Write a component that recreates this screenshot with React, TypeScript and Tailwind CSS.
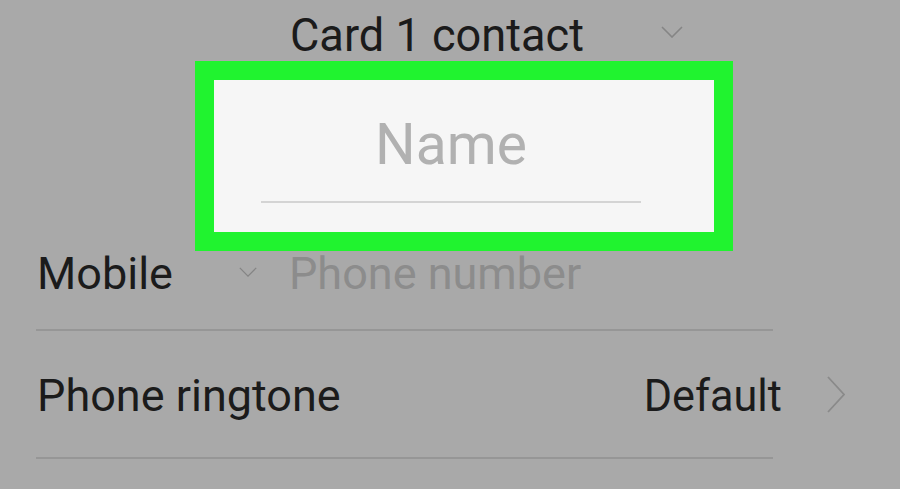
import React from "react";

const ChevronDown = ({ className }: { className?: string }) => (
  <svg viewBox="0 0 22 12" className={className} fill="none" stroke="#858585" strokeWidth={1.6}>
    <path d="M1 1 L11 11 L21 1" />
  </svg>
);

const ChevronRight = ({ className }: { className?: string }) => (
  <svg viewBox="0 0 18 37" className={className} fill="none" stroke="#8a8a8a" strokeWidth={1.8}>
    <path d="M1 1 L17 18.5 L1 36" />
  </svg>
);

export default function App() {
  return (
    <div
      className="w-[900px] h-[489px] bg-[#a9a9a9] overflow-hidden flex flex-col text-[#1b1b1b]"
      style={{ fontFamily: "Roboto, 'Noto Sans', sans-serif" }}
    >
      {/* header */}
      <div className="h-[61px] flex items-start pt-[11px] pl-[290px]">
        <span className="text-[47px] leading-none scale-x-[0.96] origin-left">Card 1 contact</span>
        <ChevronDown className="w-[22px] h-[12px] ml-[65px] mt-[15px]" />
      </div>

      {/* highlighted name field */}
      <div className="ml-[195px] w-[538px] h-[190px] border-[19px] border-[#20f32f] bg-[#f6f6f6] flex flex-col">
        <div className="ml-[47px] w-[380px] flex flex-col items-center">
          <span className="mt-[36px] text-[57px] leading-none text-[#b1b1b1]">Name</span>
          <div className="mt-[28px] w-full h-[2px] bg-[#d4d4d4]" />
        </div>
      </div>

      {/* mobile row */}
      <div className="h-[78px] flex items-start pl-[37px]">
        <span className="text-[45px] leading-none">Mobile</span>
        <ChevronDown className="w-[18px] h-[10px] ml-[66px] mt-[16px]" />
        <span className="ml-[32px] text-[45px] leading-none text-[#8c8c8c]">Phone number</span>
      </div>
      <div className="ml-[36px] w-[737px] h-[2px] bg-[#969696]" />

      {/* ringtone row */}
      <div className="h-[126px] flex items-start pt-[42px] pl-[37px]">
        <span className="text-[45px] leading-none">Phone ringtone</span>
        <span className="ml-auto text-[45px] leading-none scale-x-[0.96] origin-right">Default</span>
        <ChevronRight className="w-[18px] h-[37px] ml-[45px] mr-[55px] mt-[3px]" />
      </div>
      <div className="ml-[36px] w-[737px] h-[2px] bg-[#969696]" />
    </div>
  );
}
